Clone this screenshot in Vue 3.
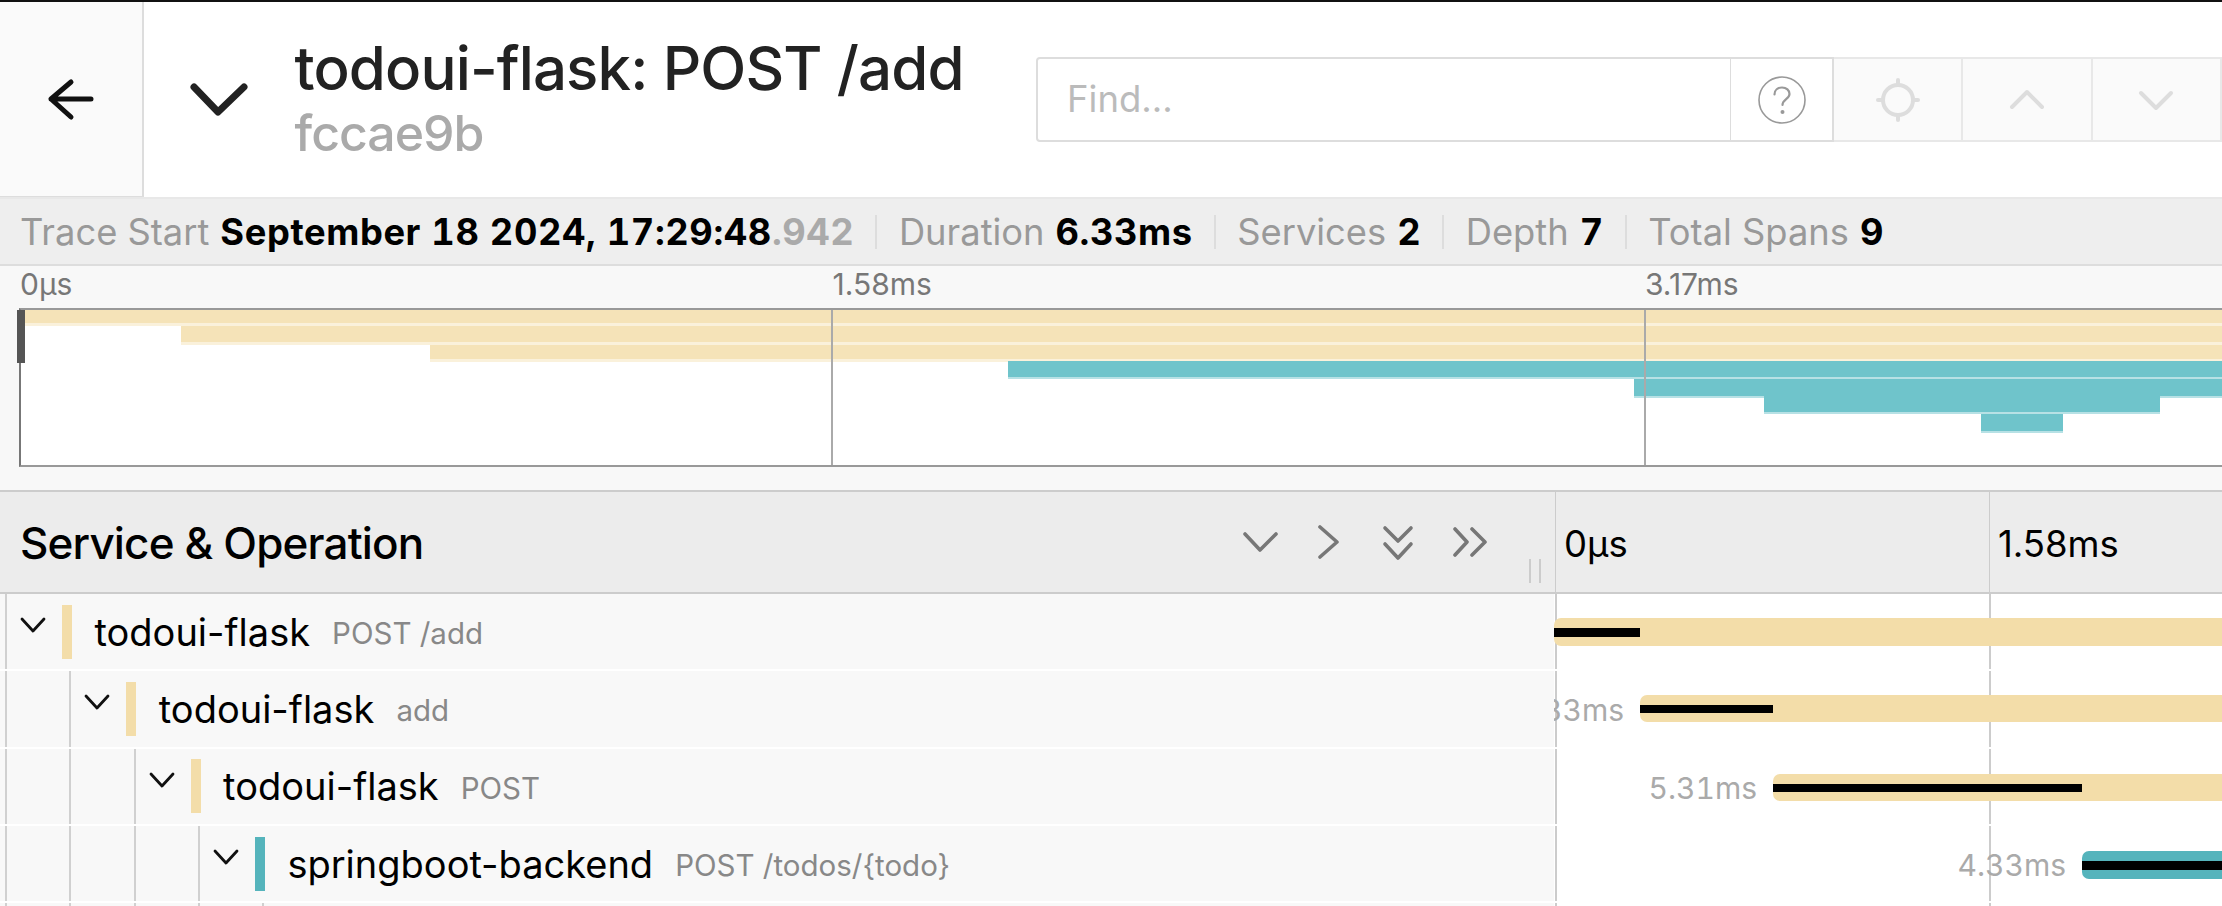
<script setup>
const summary = [
  { label: 'Duration', value: '6.33ms' },
  { label: 'Services', value: '2' },
  { label: 'Depth', value: '7' },
  { label: 'Total Spans', value: '9' },
]
const miniBars = [
  { x: 1, y: 0, w: 2200, h: 13, c: 'tan' },
  { x: 160, y: 16, w: 2041, h: 16, c: 'tan' },
  { x: 409, y: 35, w: 1792, h: 14, c: 'tan' },
  { x: 987, y: 51, w: 1214, h: 16, c: 'teal' },
  { x: 1613, y: 69, w: 588, h: 17, c: 'teal' },
  { x: 1743, y: 86, w: 396, h: 16, c: 'teal' },
  { x: 1960, y: 104, w: 82, h: 17, c: 'teal' },
]
const rows = [
  { depth: 0, svc: 'todoui-flask', op: 'POST /add', color: '#f3dda9', x: 0, top: 24, h: 28, self: 86, sy: 10, sh: 9 },
  { depth: 1, svc: 'todoui-flask', op: 'add', color: '#f3dda9', x: 86, top: 24, h: 27, self: 133, sy: 10, sh: 8, label: '6.33ms' },
  { depth: 2, svc: 'todoui-flask', op: 'POST', color: '#f3dda9', x: 219, top: 25, h: 27, self: 309, sy: 10, sh: 8, label: '5.31ms' },
  { depth: 3, svc: 'springboot-backend', op: 'POST /todos/{todo}', color: '#55b4bc', x: 528, top: 25, h: 28, self: 200, sy: 10, sh: 9, label: '4.33ms' },
  { depth: 4, svc: '', op: '', color: 'transparent', x: 0, top: 0, h: 0, self: 0, sy: 0, sh: 0 },
]
</script>

<template>
  <div class="page">
    <header class="top">
      <div class="back">
        <svg class="arrow" width="48" height="44" viewBox="0 0 48 44" fill="none">
          <path d="M4 22H44M24 5L4 22L24 40" stroke="#111" stroke-width="5" stroke-linecap="round" stroke-linejoin="round" />
        </svg>
      </div>
      <svg class="collapse" width="60" height="36" viewBox="0 0 60 36" fill="none">
        <path d="M5 5L29 30L55 5" stroke="#222" stroke-width="7" stroke-linecap="round" stroke-linejoin="round" />
      </svg>
      <div class="title-block">
        <h1>todoui-flask: POST /add</h1>
        <div class="trace-id">fccae9b</div>
      </div>
      <div class="find">
        <div class="find-input">Find...</div>
        <div class="find-help">
          <svg width="50" height="50" viewBox="0 0 50 50" fill="none">
            <circle cx="25" cy="25" r="23" stroke="#999" stroke-width="1.6" />
            <path d="M17.5 19.5C17.5 15 21 12.5 25 12.5C29.5 12.5 32.5 15.5 32.5 19C32.5 24 25.5 24.5 25.5 30" stroke="#999" stroke-width="2.2" stroke-linecap="round" />
            <circle cx="25.5" cy="37" r="2" fill="#999" />
          </svg>
        </div>
        <div class="find-btn">
          <svg width="44" height="44" viewBox="0 0 44 44" fill="none">
            <circle cx="22" cy="22" r="15" stroke="#ddd" stroke-width="4" />
            <path d="M22 2V7M22 37V42M2 22H7M37 22H42" stroke="#ddd" stroke-width="4" stroke-linecap="round" />
          </svg>
        </div>
        <div class="find-btn">
          <svg width="36" height="22" viewBox="0 0 36 22" fill="none">
            <path d="M3 18L18 3L33 18" stroke="#ddd" stroke-width="4" stroke-linecap="round" stroke-linejoin="round" />
          </svg>
        </div>
        <div class="find-btn">
          <svg width="36" height="22" viewBox="0 0 36 22" fill="none">
            <path d="M3 4L18 19L33 4" stroke="#ddd" stroke-width="4" stroke-linecap="round" stroke-linejoin="round" />
          </svg>
        </div>
      </div>
    </header>

    <div class="summary">
      <span class="sum-item first">
        <span class="k">Trace Start</span>
        <b>September 18 2024, 17:29:48<span class="ms">.942</span></b>
      </span>
      <span v-for="s in summary" :key="s.label" class="sum-item">
        <span class="k">{{ s.label }}</span>
        <b>{{ s.value }}</b>
      </span>
    </div>

    <section class="minimap">
      <div class="mini-ticks">
        <span>0µs</span>
        <span>1.58ms</span>
        <span>3.17ms</span>
      </div>
      <div class="mini-canvas">
        <div
          v-for="(b, i) in miniBars"
          :key="i"
          class="mini-bar"
          :class="b.c"
          :style="{ left: b.x + 'px', top: b.y + 'px', width: b.w + 'px', height: b.h + 'px' }"
        ></div>
        <div class="mini-line l1"></div>
        <div class="mini-line l2"></div>
        <div class="mini-handle"></div>
      </div>
    </section>

    <section class="timeline">
      <div class="tl-head">
        <div class="tl-left">
          <span class="tl-title">Service &amp; Operation</span>
          <div class="tl-tools">
            <svg class="t1" width="36" height="22" viewBox="0 0 36 22" fill="none"><path d="M2 3L17 19L33 3" /></svg>
            <svg class="t2" width="24" height="34" viewBox="0 0 24 34" fill="none"><path d="M3 2L20 17L3 32" /></svg>
            <svg class="t3" width="32" height="36" viewBox="0 0 32 36" fill="none"><path d="M3 3L16 16L29 3M3 19L16 33L29 19" /></svg>
            <svg class="t4" width="36" height="30" viewBox="0 0 36 30" fill="none"><path d="M3 2L15 15L3 28M20 2L33 15L20 28" /></svg>
          </div>
          <div class="grip"></div>
        </div>
        <div class="tl-ticks">
          <span class="tl-tick">0µs</span>
          <span class="tl-tick">1.58ms</span>
        </div>
      </div>

      <div v-for="(r, i) in rows" :key="i" class="row">
        <div class="row-left">
          <span v-for="d in r.depth" :key="d" class="guide"></span>
          <div class="node">
            <template v-if="r.svc">
              <svg class="node-chev" width="26" height="16" viewBox="0 0 26 16" fill="none">
                <path d="M2 2L13 14L24 2" stroke="#111" stroke-width="2.8" stroke-linecap="round" stroke-linejoin="round" />
              </svg>
              <span class="swatch" :style="{ background: r.color }"></span>
              <span class="svc">{{ r.svc }}</span>
              <span class="op">{{ r.op }}</span>
            </template>
          </div>
        </div>
        <div class="row-right">
          <div class="grid-line"></div>
          <template v-if="r.svc">
            <span
              v-if="r.label"
              class="span-label"
              :style="{ right: 668 - r.x + 16 + 'px' }"
            >{{ r.label }}</span>
            <div
              class="span-bar"
              :style="{ left: r.x + 'px', top: r.top + 'px', height: r.h + 'px', background: r.color }"
            >
              <div
                class="span-self"
                :style="{ width: r.self + 'px', top: r.sy + 'px', height: r.sh + 'px' }"
              ></div>
            </div>
          </template>
        </div>
      </div>
    </section>
  </div>
</template>

<style scoped>
.page {
  width: 2222px;
  height: 906px;
  overflow: hidden;
  background: #fff;
  border-top: 2px solid #111;
  box-sizing: border-box;
  font-family: Inter, "Liberation Sans", sans-serif;
  color: #000;
}
.top {
  display: flex;
  height: 195px;
  align-items: stretch;
}
.back {
  width: 144px;
  flex: none;
  box-sizing: border-box;
  background: #fafafa;
  border-right: 2px solid #ddd;
  border-bottom: 1px solid #ddd;
  padding: 75px 0 0 47px;
}
.arrow { display: block; }
.collapse {
  flex: none;
  margin: 80px 0 0 45px;
}
.title-block {
  flex: 1;
  margin-left: 45.5px;
  padding-top: 31px;
}
h1 {
  margin: 0;
  font-size: 60px;
  font-weight: 500;
  line-height: 70px;
  color: #222;
  letter-spacing: -0.87px;
  white-space: nowrap;
}
.trace-id {
  font-size: 50px;
  line-height: 60px;
  color: #aaa;
  font-weight: 500;
  letter-spacing: -1px;
}
.find {
  width: 1186px;
  flex: none;
  height: 85px;
  margin-top: 55px;
  display: flex;
  box-sizing: border-box;
}
.find-input {
  width: 695px;
  flex: none;
  box-sizing: border-box;
  border: 2px solid #ddd;
  border-right: 1px solid #ddd;
  border-radius: 4px 0 0 4px;
  padding-left: 29px;
  font-size: 36.5px;
  line-height: 81px;
  color: #bbb;
}
.find-help {
  width: 103px;
  flex: none;
  box-sizing: border-box;
  border: 2px solid #ddd;
  border-left: 0;
  display: flex;
  align-items: center;
  justify-content: center;
}
.find-btn {
  width: 129.3px;
  flex: none;
  box-sizing: border-box;
  background: #fafafa;
  border: 2px solid #e8e8e8;
  border-left: 0;
  display: flex;
  align-items: center;
  justify-content: center;
}
.summary {
  height: 69px;
  box-sizing: border-box;
  background: #eee;
  border-top: 2px solid #e8e8e8;
  border-bottom: 2px solid #ddd;
  display: flex;
  align-items: center;
  padding-left: 20px;
  font-size: 36.3px;
}
.sum-item {
  display: flex;
  gap: 11px;
  align-items: center;
  height: 34px;
  line-height: 34px;
  padding: 0 21px 0 21.5px;
  border-left: 2px solid #ddd;
  white-space: nowrap;
}
.sum-item.first {
  padding-left: 0;
  border-left: 0;
}
.k { color: #999; }
.sum-item b {
  font-weight: 700;
  color: #000;
  font-variant-numeric: tabular-nums;
  letter-spacing: 0.6px;
}
.ms { color: #aaa; }
.minimap {
  height: 226px;
  box-sizing: border-box;
  background: #f8f8f8;
  border-bottom: 2px solid #ccc;
  padding-left: 19px;
}
.mini-ticks {
  display: flex;
  height: 42px;
  box-sizing: border-box;
  padding-bottom: 6px;
  align-items: center;
  font-size: 30px;
  color: #777;
}
.mini-ticks span {
  width: 812.5px;
  flex: none;
  padding-left: 1px;
  box-sizing: border-box;
}
.mini-canvas {
  position: relative;
  height: 159px;
  box-sizing: border-box;
  background: #fff;
  border-top: 2px solid #999;
  border-bottom: 2px solid #999;
  border-left: 2px solid #777;
}
.mini-bar { position: absolute; }
.tan {
  background: #f5e3b8;
  box-shadow: 0 3px 0 rgba(245, 227, 184, 0.5);
}
.teal {
  background: #6fc4cb;
  box-shadow: 0 2px 0 rgba(111, 196, 203, 0.5);
}
.mini-line {
  position: absolute;
  top: 0;
  bottom: 0;
  width: 2px;
  background: #aaa;
}
.l1 { left: 810px; }
.l2 { left: 1623px; }
.mini-handle {
  position: absolute;
  left: -4px;
  top: 0;
  width: 8px;
  height: 53px;
  background: #555;
}
.tl-head {
  display: flex;
  height: 102px;
  box-sizing: border-box;
  background: #ececec;
  border-bottom: 2px solid #ccc;
}
.tl-left {
  position: relative;
  width: 1555px;
  flex: none;
  box-sizing: border-box;
  padding-left: 20px;
  display: flex;
  align-items: center;
}
.tl-title {
  font-size: 44px;
  font-weight: 500;
  letter-spacing: -0.85px;
  white-space: nowrap;
  margin-top: 1px;
}
.tl-tools svg {
  position: absolute;
}
.tl-tools path {
  stroke: #777;
  stroke-width: 3.6;
  stroke-linecap: round;
  stroke-linejoin: round;
}
.t1 { left: 1243px; top: 39px; }
.t2 { left: 1317px; top: 33px; }
.t3 { left: 1382px; top: 33px; }
.t4 { left: 1452px; top: 35px; }
.grip {
  position: absolute;
  left: 1529px;
  top: 67px;
  width: 8px;
  height: 24px;
  border-left: 2px solid #ccc;
  border-right: 2px solid #ccc;
}
.tl-ticks {
  flex: 1;
  display: flex;
  font-size: 36.5px;
}
.tl-tick {
  width: 434px;
  box-sizing: border-box;
  border-left: 1.5px solid #ccc;
  padding: 30px 0 0 8px;
  line-height: 44px;
}
.row {
  display: flex;
  height: 77.3px;
  box-sizing: border-box;
  border-bottom: 2px solid #fff;
}
.row-left {
  width: 1554px;
  flex: none;
  display: flex;
  background: #f8f8f8;
  padding-left: 5px;
  box-sizing: border-box;
}
.guide {
  width: 64.3px;
  flex: none;
  box-sizing: border-box;
  border-left: 2px solid #d0d0d0;
}
.node {
  flex: 1;
  border-left: 2px solid #d0d0d0;
  position: relative;
  display: flex;
  align-items: center;
  padding-left: 13px;
  white-space: nowrap;
}
.node-chev {
  flex: none;
  margin-top: -13px;
  margin-right: 16px;
}
.swatch {
  width: 10px;
  height: 54px;
  flex: none;
  margin-right: 22.5px;
}
.svc {
  font-size: 38px;
  margin-right: 22px;
  line-height: 44px;
}
.op {
  font-size: 29.5px;
  color: #888;
  line-height: 44px;
  margin-top: 3px;
}
.row-right {
  flex: 1;
  position: relative;
  overflow: hidden;
  background: #fff;
}
.row-right::before {
  content: "";
  position: absolute;
  left: 1px;
  top: 0;
  bottom: 0;
  width: 1.5px;
  background: #ccc;
}
.grid-line {
  position: absolute;
  left: 435px;
  top: 0;
  bottom: 0;
  width: 1.5px;
  background: #ccc;
}
.span-bar {
  position: absolute;
  right: -10px;
  border-radius: 7px;
}
.span-self {
  position: absolute;
  left: 0;
  background: #000;
}
.span-label {
  position: absolute;
  top: 22px;
  font-size: 30px;
  line-height: 34px;
  color: #aaa;
  white-space: nowrap;
  font-variant-numeric: tabular-nums;
}
</style>

<style>
html, body { margin: 0; background: #fff; }
</style>
